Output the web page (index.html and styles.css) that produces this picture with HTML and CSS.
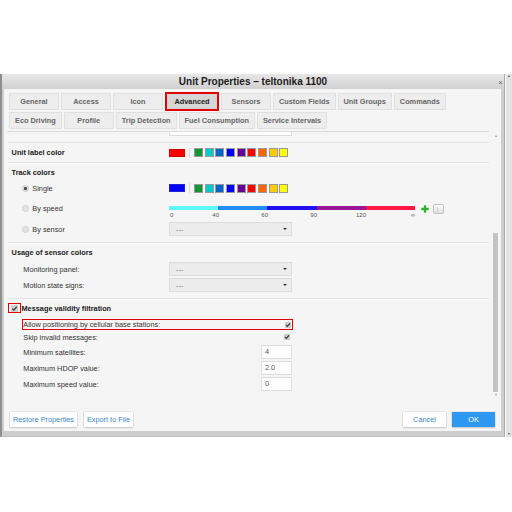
FILE: index.html
```html
<!DOCTYPE html>
<html>
<head>
<meta charset="utf-8">
<link rel="stylesheet" href="styles.css">
</head>
<body>
<div class="screen">
  <div class="dialog">
    <div class="titlebar">
      <span class="title">Unit Properties – teltonika 1100</span>
      <span class="close">×</span>
    </div>
    <div class="panel">
      <div class="tabs">
        <div class="tabrow">
          <div class="tab">General</div>
          <div class="tab">Access</div>
          <div class="tab">Icon</div>
          <div class="tab active">Advanced</div>
          <div class="tab">Sensors</div>
          <div class="tab">Custom Fields</div>
          <div class="tab">Unit Groups</div>
          <div class="tab">Commands</div>
        </div>
        <div class="tabrow">
          <div class="tab">Eco Driving</div>
          <div class="tab">Profile</div>
          <div class="tab">Trip Detection</div>
          <div class="tab">Fuel Consumption</div>
          <div class="tab">Service Intervals</div>
        </div>
      </div>

      <div class="middle">
        <div class="viewport">
          <div class="partial"><div class="stub"></div></div>
          <div class="sep"></div>

          <div class="row h19">
            <div class="lab head">Unit label color</div>
            <div class="swatches">
              <span class="big red"></span><span class="vsep"></span>
              <span class="sw c1"></span><span class="sw c2"></span><span class="sw c3"></span><span class="sw c4"></span><span class="sw c5"></span><span class="sw c6"></span><span class="sw c7"></span><span class="sw c8"></span><span class="sw c9"></span>
            </div>
          </div>
          <div class="sep"></div>

          <div class="sec secB">
            <div class="row h18"><div class="lab head">Track colors</div></div>
            <div class="row h14">
              <div class="lab rlab"><span class="radio on"></span>Single</div>
              <div class="swatches">
                <span class="big blue"></span><span class="vsep"></span>
                <span class="sw c1"></span><span class="sw c2"></span><span class="sw c3"></span><span class="sw c4"></span><span class="sw c5"></span><span class="sw c6"></span><span class="sw c7"></span><span class="sw c8"></span><span class="sw c9"></span>
              </div>
            </div>
            <div class="row speedrow">
              <div class="lab rlab tall"><span class="radio"></span>By speed</div>
              <div class="speed">
                <div class="bar"><span class="g1"></span><span class="g2"></span><span class="g3"></span><span class="g4"></span><span class="g5"></span></div>
                <div class="ticks"><span class="t1"><i>0</i><i>40</i></span><span>60</span><span>90</span><span>120</span><span>∞</span></div>
              </div>
              <svg class="plus" width="8" height="8" viewBox="0 0 8 8"><path d="M4 0.3V7.7M0.3 4H7.7" stroke="#2fb52f" stroke-width="2.3"/></svg>
              <div class="mini"><span class="mini-mark"></span></div>
            </div>
            <div class="row h14 mt1">
              <div class="lab rlab"><span class="radio"></span>By sensor</div>
              <div class="select"><span>---</span><span class="caret"></span></div>
            </div>
          </div>
          <div class="sep"></div>

          <div class="sec secC">
            <div class="row h19"><div class="lab head">Usage of sensor colors</div></div>
            <div class="row h14">
              <div class="lab sublab">Monitoring panel:</div>
              <div class="select"><span>---</span><span class="caret"></span></div>
            </div>
            <div class="row h14 mt2">
              <div class="lab sublab">Motion state signs:</div>
              <div class="select"><span>---</span><span class="caret"></span></div>
            </div>
          </div>
          <div class="sep"></div>

          <div class="sec secD">
            <div class="mvf">
              <span class="redcb"><span class="bigcb"><svg width="7" height="7" viewBox="0 0 7 7"><path d="M1.3 3.6L2.8 5.1L5.8 1.6" fill="none" stroke="#333" stroke-width="1.2"/></svg></span></span>
              <span class="mvf-text">Message validity filtration</span>
            </div>
            <div class="allow">
              <span>Allow positioning by cellular base stations:</span>
              <span class="cb"><svg width="6" height="6" viewBox="0 0 6 6"><path d="M1 3.1L2.3 4.4L5 1.3" fill="none" stroke="#333" stroke-width="1.1"/></svg></span>
            </div>
            <div class="frow">
              <span>Skip invalid messages:</span>
              <span class="cb"><svg width="6" height="6" viewBox="0 0 6 6"><path d="M1 3.1L2.3 4.4L5 1.3" fill="none" stroke="#333" stroke-width="1.1"/></svg></span>
            </div>
            <div class="frow mt1">
              <span>Minimum satellites:</span>
              <span class="num">4</span>
            </div>
            <div class="frow mt2">
              <span>Maximum HDOP value:</span>
              <span class="num">2.0</span>
            </div>
            <div class="frow mt2">
              <span>Maximum speed value:</span>
              <span class="num">0</span>
            </div>
          </div>
        </div>
        <div class="vscroll">
          <div class="varr"><span class="tri-up"></span></div>
          <div class="track"><div class="thumb"></div></div>
          <div class="varr down"><span class="tri-down"></span></div>
        </div>
      </div>

      <div class="footer">
        <div class="btns">
          <div class="btn restore">Restore Properties</div>
          <div class="btn export">Export to File</div>
        </div>
        <div class="btns right">
          <div class="btn cancel">Cancel</div>
          <div class="btn ok">OK</div>
        </div>
      </div>
    </div>
  </div>
  <div class="pagescroll">
    <span class="tri-up dark"></span>
    <span class="tri-down dark"></span>
  </div>
</div>
</body>
</html>
```

FILE: styles.css
```css
* { box-sizing: border-box; margin: 0; padding: 0; }
html, body { width: 512px; height: 512px; overflow: hidden; background: #ffffff; }
body { font-family: "Liberation Sans", Arial, sans-serif; font-size: 7.33px; color: #333; }
i { font-style: normal; }

.screen { display: flex; padding-top: 74px; height: 512px; }

.dialog {
  width: 505px; height: 363px; flex: none;
  display: flex; flex-direction: column;
  border-left: 2px solid #8e8e8e; border-right: 1px solid #a9a9a9; border-bottom: 1px solid #bdbdbd;
  background: #cecece; padding-bottom: 5px;
}

.titlebar {
  height: 15px; flex: none;
  display: grid; grid-template-columns: 1fr auto 1fr; align-items: center;
  background: linear-gradient(#e7e7e7, #d0d0d0);
}
.title { grid-column: 2; font-weight: bold; font-size: 10px; color: #1c1c1c; line-height: 15px; }
.close { grid-column: 3; justify-self: end; font-size: 8px; color: #666; line-height: 8px; padding-right: 1px; margin-top: 3px; }

.panel { flex: 1; margin: 0 3px 0 2px; background: #f5f5f5; display: flex; flex-direction: column; }

.tabs {
  flex: none; margin-left: 3px; width: 482px;
  padding: 4px 0 2px 2px; border-bottom: 1px solid #dadada;
  display: flex; flex-direction: column; gap: 2px;
}
.tabrow { display: flex; gap: 2px; height: 17px; }
.tab {
  min-width: 50px; padding: 0 5px; height: 17px; line-height: 15px; text-align: center;
  font-weight: bold; color: #666; background: #ededed; border: 1px solid #e0e0e0;
  white-space: nowrap;
}
.tab.active {
  min-width: 54px; height: 19px; line-height: 15px; margin-top: -1px;
  border: 2px solid #e30000; background: #d6d6d6; color: #1e1e1e;
}

.middle { display: flex; height: 265px; margin-left: 3px; flex: none; }
.viewport { width: 485px; flex: none; overflow: hidden; display: flex; flex-direction: column; }

.partial { height: 10px; flex: none; padding-left: 162px; }
.stub { width: 123px; height: 14px; margin-top: -10px; background: #fff; border: 1px solid #dcdcdc; }

.sep { height: 1px; flex: none; width: 481px; margin-left: 1px; background: #e3e3e3; }

.sec { display: flex; flex-direction: column; flex: none; }
.secB { height: 79px; }
.secC { height: 55px; }

.row { display: flex; align-items: center; flex: none; }
.h19 { height: 19px; }
.h18 { height: 18px; }
.h14 { height: 14px; }
.mt1 { margin-top: 1px; }
.mt2 { margin-top: 2px; }

.lab { width: 162px; flex: none; }
.head { font-weight: bold; color: #202020; padding-left: 4.6px; }
.sublab { padding-left: 16.3px; color: #333; }
.rlab { padding-left: 15.3px; display: flex; align-items: center; color: #333; }
.rlab.tall { height: 26px; }

.radio {
  width: 7px; height: 7px; border-radius: 50%; flex: none; margin-right: 3px;
  background: #e3e3e3; border: 1px solid #d0d0d0;
}
.radio.on { background: radial-gradient(circle, #4a4a4a 0 1.3px, #e3e3e3 1.8px); border-color: #c6c6c6; }

.swatches { display: flex; align-items: center; }
.big { width: 16px; height: 8px; border: 1px solid #aaa; }
.big.red { background: #ff0000; border-color: #d00; }
.big.blue { background: #0000ff; border-color: #22c; }
.vsep { width: 1px; height: 10px; background: #dcdcdc; margin: 0 4px; }
.sw { width: 9px; height: 9px; border: 1px solid #999; margin-right: 1.67px; }
.c1 { background: #0d9632; }
.c2 { background: #00cccc; }
.c3 { background: #0066cc; }
.c4 { background: #0000ff; }
.c5 { background: #660099; }
.c6 { background: #ff0000; }
.c7 { background: #ff6600; }
.c8 { background: #ffcc00; }
.c9 { background: #ffff00; }

.speedrow { height: 26px; align-items: flex-start; }
.speed { width: 246px; flex: none; margin-top: 11px; }
.bar { display: flex; height: 4px; }
.bar span { flex: 1; }
.g1 { background: #5ff7f7; }
.g2 { background: #1e8cf0; }
.g3 { background: #1f10ee; }
.g4 { background: #9a1598; }
.g5 { background: #ff1744; }
.ticks { display: flex; font-size: 6px; line-height: 8px; margin-top: 1px; color: #555; }
.ticks span { flex: 1; text-align: right; }
.ticks .t1 { display: flex; justify-content: space-between; padding-left: 1px; }
.plus { flex: none; margin: 10px 0 0 6px; }
.mini {
  width: 11px; height: 10px; flex: none; margin: 9px 0 0 4px;
  border: 1px solid #c2c2c2; border-radius: 2px; background: linear-gradient(#fbfbfb, #e0e0e0);
  display: flex; align-items: center; padding-left: 3px;
}
.mini-mark { width: 1px; height: 5px; background: #cfcfcf; }

.select {
  width: 123px; height: 14px; flex: none; display: flex; align-items: center; justify-content: space-between;
  padding: 0 4px 0 6px; background: #ececec; border: 1px solid #dcdcdc; color: #777;
}
.caret { width: 0; height: 0; border-left: 2px solid transparent; border-right: 2px solid transparent; border-top: 2.5px solid #333; }

.mvf { height: 19px; display: flex; align-items: center; padding-left: 1px; flex: none; }
.redcb {
  width: 13px; height: 10.5px; border: 1.5px solid #e30000; flex: none;
  display: flex; align-items: center; justify-content: center; margin-top: -1px;
}
.bigcb { width: 7px; height: 7px; background: #cdcdcd; border-radius: 1px; display: flex; }
.mvf-text { font-weight: bold; color: #202020; margin-left: 0.5px; }

.allow {
  margin: 1px 0 0 15px; width: 271px; height: 11px; flex: none;
  border: 1.3px solid #e30000; display: flex; align-items: center; justify-content: space-between;
  padding: 0 1.5px 0 0.3px; color: #333;
}
.frow {
  width: 285px; height: 14px; flex: none; padding-left: 16.3px;
  display: flex; align-items: center; justify-content: space-between; color: #333;
}
.cb { width: 6px; height: 6px; background: #c9c9c9; border-radius: 1px; display: flex; flex: none; margin-right: 2px; }
.allow .cb { margin-right: 0; }
.num {
  width: 31px; height: 14px; background: #fff; border: 1px solid #dcdcdc;
  padding-left: 3px; color: #555; line-height: 12px;
}

.vscroll { width: 6px; margin-left: 1px; flex: none; display: flex; flex-direction: column; }
.varr { height: 7px; flex: none; display: flex; justify-content: center; align-items: center; }
.varr.down { height: 5px; }
.track { flex: 1; }
.thumb { width: 5px; height: 159px; margin-top: 94px; background: #c3c3c3; }
.tri-up { width: 0; height: 0; border-left: 1.5px solid transparent; border-right: 1.5px solid transparent; border-bottom: 2px solid #999; }
.tri-down { width: 0; height: 0; border-left: 1.5px solid transparent; border-right: 1.5px solid transparent; border-top: 2px solid #999; }
.tri-up.dark { border-bottom-color: #555; }
.tri-down.dark { border-top-color: #555; }

.footer { flex: 1; display: flex; justify-content: space-between; align-items: flex-start; padding: 15px 6px 0 6px; }
.btns { display: flex; gap: 7px; }
.btns.right { gap: 6px; }
.btn {
  height: 15px; line-height: 15px; padding: 0 2px; text-align: center; white-space: nowrap;
  background: #fff; color: #3b87c4;
  box-shadow: 0 0 1px rgba(0,0,0,0.3), 0 1px 1.5px rgba(0,0,0,0.15);
}
.restore { width: 67px; }
.export { width: 49px; }
.cancel { width: 43px; }
.ok { width: 43px; background: #2e97f1; color: #fff; }

.pagescroll {
  width: 7px; height: 363px; flex: none; background: #e2e2e2; border-left: 1px solid #f7f7f7;
  display: flex; flex-direction: column; justify-content: space-between; align-items: center; padding: 1px 0 2px;
}
```
